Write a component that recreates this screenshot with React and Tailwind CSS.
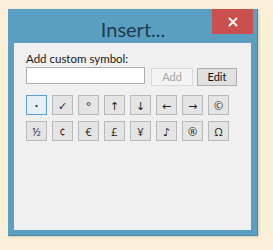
import React from "react";

const row1 = ["•", "✓", "°", "↑", "↓", "←", "→", "©"];
const row2 = ["½", "¢", "€", "£", "¥", "♪", "®", "Ω"];

function Sym({ ch, active }) {
  return (
    <div
      className={
        "w-[21px] h-[20px] flex items-center justify-center text-[11px] font-normal leading-none text-[#222] border " +
        (active
          ? "border-[#5a9fd8] bg-[#e6eef6]"
          : "border-[#b9b9b9] bg-[#e4e4e4]")
      }
      style={{ fontFamily: '"Open Sans", "DejaVu Sans", sans-serif' }}
    >
      {ch === "•" ? <span className="text-[9px]">•</span> : ch}
    </div>
  );
}

export default function App() {
  return (
    <div
      className="w-[273px] h-[250px] bg-[#fcefd8] pt-[9px] pl-[8px]"
      style={{ fontFamily: 'Lato, "Open Sans", sans-serif' }}
    >
      <div className="w-[250px] h-[227px] bg-[#5a9fc1] flex flex-col border-r border-b border-[#4d8cab] shadow-[1px_1px_2px_rgba(0,0,0,0.15)]">
        <div className="relative h-[34px] flex items-center justify-center">
          <span className="text-[20px] font-normal text-[#1d3b4f] leading-none mt-[5px] ml-[1px]">
            Insert...
          </span>
          <div className="absolute right-[4px] top-0 w-[41px] h-[25px] bg-[#c9504e] flex items-center justify-center">
            <svg width="10" height="10" viewBox="0 0 10 10">
              <path d="M1 1L9 9M9 1L1 9" stroke="#fff" strokeWidth="1.8" />
            </svg>
          </div>
        </div>
        <div className="mx-[6px] h-[187px] bg-[#f0f0f0] pl-[12px] pt-[8px]">
          <div className="text-[11.5px] leading-[16px] text-[#1a1a1a]">
            Add custom symbol:
          </div>
          <div className="flex items-start">
            <div className="w-[119px] h-[17px] bg-white border border-[#abadb3]" />
            <div className="ml-[6px] mt-[1px] w-[42px] h-[18px] border border-[#d9d9d9] bg-[#f4f4f4] flex items-center justify-center text-[11px] text-[#a3a3a3]">
              Add
            </div>
            <div className="ml-[4px] mt-[1px] w-[40px] h-[18px] border border-[#adadad] bg-[#e1e1e1] flex items-center justify-center text-[11px] text-[#111]">
              Edit
            </div>
          </div>
          <div className="mt-[9px] flex flex-col gap-[6px]">
            <div className="flex gap-[5px]">
              {row1.map((c, i) => (
                <Sym key={i} ch={c} active={i === 0} />
              ))}
            </div>
            <div className="flex gap-[5px]">
              {row2.map((c, i) => (
                <Sym key={i} ch={c} />
              ))}
            </div>
          </div>
        </div>
      </div>
    </div>
  );
}
